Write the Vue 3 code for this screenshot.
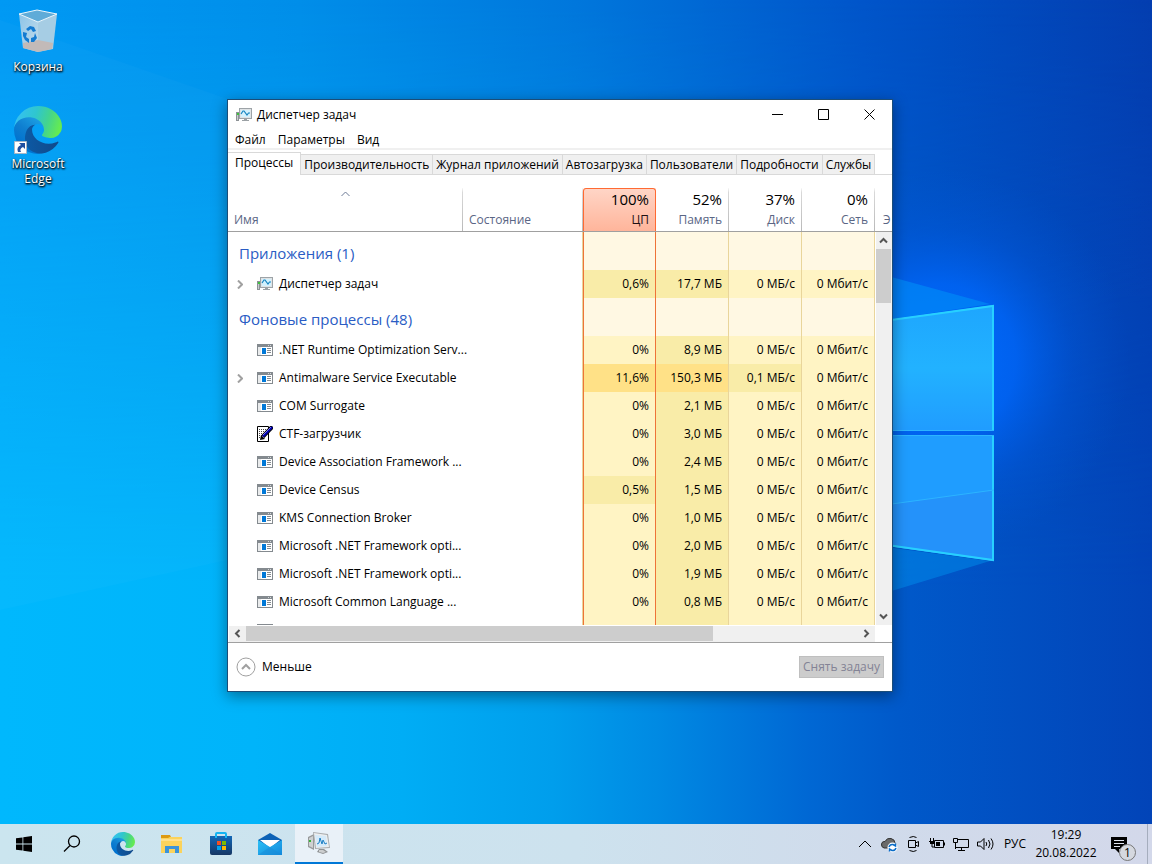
<template>
  <div class="desktop">
    <!-- shared icon shapes -->
    <svg class="sprites" aria-hidden="true">
      <defs>
        <linearGradient id="edge-dark" x1="60" y1="170" x2="236" y2="170" gradientUnits="userSpaceOnUse">
          <stop offset="0" stop-color="#0c59a4" />
          <stop offset="1" stop-color="#114a8b" />
        </linearGradient>
        <linearGradient id="edge-mid" x1="150" y1="90" x2="50" y2="220" gradientUnits="userSpaceOnUse">
          <stop offset="0" stop-color="#1b9de2" />
          <stop offset="0.5" stop-color="#0f7fd0" />
          <stop offset="1" stop-color="#0072cf" />
        </linearGradient>
        <linearGradient id="edge-top" x1="10" y1="60" x2="240" y2="130" gradientUnits="userSpaceOnUse">
          <stop offset="0" stop-color="#35c1f1" />
          <stop offset="0.4" stop-color="#2fc6cf" />
          <stop offset="0.7" stop-color="#43d48e" />
          <stop offset="1" stop-color="#66eb50" />
        </linearGradient>
        <linearGradient id="bin-face" x1="0" y1="0" x2="1" y2="1">
          <stop offset="0" stop-color="#8cc4e8" />
          <stop offset="1" stop-color="#c4dcea" />
        </linearGradient>
        <linearGradient id="store-face" x1="0" y1="0" x2="0" y2="1">
          <stop offset="0" stop-color="#1268b8" />
          <stop offset="1" stop-color="#173764" />
        </linearGradient>
        <linearGradient id="mail-face" x1="0" y1="0" x2="1" y2="1">
          <stop offset="0" stop-color="#2cc0f5" />
          <stop offset="1" stop-color="#1289dc" />
        </linearGradient>
      </defs>
      <symbol id="edge" viewBox="0 0 256 256">
        <path fill="url(#edge-mid)" d="M105.7 241.4a79.2 79.2 0 0 1-22.7-21.3 80.7 80.7 0 0 1 29.5-120c3.2-1.5 8.5-4.1 15.6-4a32.4 32.4 0 0 1 25.7 13 31.9 31.9 0 0 1 6.3 18.7c0-.2 24.5-79.6-80-79.6-43.9 0-80 41.6-80 78.2a130.2 130.2 0 0 0 12.1 56 128 128 0 0 0 156.4 67 75.5 75.5 0 0 1-62.9-8z" />
        <path fill="url(#edge-dark)" d="M231 190.5c-3.4 1.8-6.9 3.4-10.5 4.7a101.5 101.5 0 0 1-35.9 6.4c-47.3 0-88.5-32.5-88.5-74.3 0-11.4 6.4-21.9 16.4-27.3-42.8 1.8-53.8 46.4-53.8 72.5 0 74 68.1 81.4 82.8 81.4 7.9 0 19.8-2.3 27-4.6l1.3-.4a128.3 128.3 0 0 0 66.6-52.8 4 4 0 0 0-5.4-5.6z" />
        <path fill="url(#edge-top)" d="M152.3 148.9c-.9 1-3.4 2.5-3.4 5.6 0 2.6 1.7 5.2 4.8 7.3 14.3 10 41.4 8.6 41.5 8.6a59.6 59.6 0 0 0 30.3-8.3 61.4 61.4 0 0 0 30.4-52.9c.3-22.4-8-37.3-11.3-43.9C223.5 23.9 177.7 0 128 0A128 128 0 0 0 0 126.2c.5-36.5 36.8-66 80-66 3.5 0 23.5.3 42 10.1 16.3 8.6 24.9 18.9 30.8 29.2 6.2 10.7 7.3 24.1 7.3 29.5 0 5.3-2.7 13.3-7.8 19.9z" />
      </symbol>
      <symbol id="monitor" viewBox="0 0 16 16">
        <path fill="#8d9296" d="M0 5h3v9H0z" />
        <path fill="#c9cdd0" d="M1 6h1v7H1z" />
        <path fill="#3fc13f" d="M1 6h2v2H1z" />
        <path fill="#9da3a7" d="M3 1h13v11H3z" />
        <path fill="#dfe3e5" d="M4 2h11v9H4z" />
        <path fill="#d3f1fd" d="M5 3h9v7H5z" />
        <path fill="none" stroke="#1483c0" stroke-width="1.200" d="M5 7l2-3h1l3 4 1.500-2H14" />
        <path fill="#9ba1a5" d="M8 12h3v1H8zM6 13h7v1H6z" />
      </symbol>
      <symbol id="exe" viewBox="0 0 16 16">
        <path fill="#848a8f" d="M0 2h16v12H0z" />
        <path fill="#fff" d="M1 5h14v8H1z" />
        <path fill="#e9ebec" d="M1 5h3v8H1z" />
        <path fill="#d5d8da" d="M11 3h1v1h-1zM13 3h1v1h-1z" />
        <path fill="#0078d7" d="M5 6h4v6H5z" />
        <path fill="#848a8f" d="M10 6h4v1h-4zM10 8h4v1h-4zM10 10h4v1h-4z" />
      </symbol>
      <symbol id="ctf" viewBox="0 0 16 16">
        <path fill="#fff" stroke="#000" d="M.5.500h11v15H.5z" />
        <path stroke="#444" stroke-dasharray="1 1" d="M2 3.500h8M2 5.500h8M2 7.500h7M2 9.500h5M2 11.500h3" />
        <path stroke="#000" stroke-width="4" d="M15.500.500 6 10.500" />
        <path fill="#000" d="M4 9l4 4-5 1z" />
        <path stroke="#0000b0" stroke-width="2.500" d="M15 1 6 10.500" />
        <path stroke="#7777f0" d="M14 1 6 9" />
      </symbol>
    </svg>

    <svg class="wallpaper" viewBox="0 0 1152 864" preserveAspectRatio="xMidYMid slice" aria-hidden="true">
      <defs>
        <linearGradient id="sky-top" x1="0" y1="0" x2="1" y2="0">
          <stop offset="0" stop-color="#0099f4" />
          <stop offset="0.26" stop-color="#008ee9" />
          <stop offset="0.5" stop-color="#0077dc" />
          <stop offset="0.75" stop-color="#0055ca" />
          <stop offset="1" stop-color="#043eb0" />
        </linearGradient>
        <linearGradient id="sky-low" x1="0" y1="0" x2="1" y2="0">
          <stop offset="0" stop-color="#00b8fd" />
          <stop offset="0.22" stop-color="#00b4fa" />
          <stop offset="0.35" stop-color="#00adf5" />
          <stop offset="0.48" stop-color="#009eec" />
          <stop offset="0.57" stop-color="#008ae3" />
          <stop offset="0.7" stop-color="#0068d4" />
          <stop offset="0.78" stop-color="#0059ca" />
          <stop offset="1" stop-color="#0244b8" />
        </linearGradient>
        <linearGradient id="fade" x1="0" y1="0" x2="0" y2="1">
          <stop offset="0" stop-color="#000" />
          <stop offset="0.68" stop-color="#fff" />
        </linearGradient>
        <mask id="low-mask">
          <path fill="url(#fade)" d="M0 0h1152v864H0z" />
        </mask>
        <radialGradient id="glow" gradientUnits="userSpaceOnUse" cx="940" cy="360" r="190">
          <stop offset="0" stop-color="#006cff" />
          <stop offset="0.4" stop-color="#0066fa" stop-opacity="0.8" />
          <stop offset="0.7" stop-color="#005ce6" stop-opacity="0.3" />
          <stop offset="1" stop-color="#0058d8" stop-opacity="0" />
        </radialGradient>
        <linearGradient id="pane-up" x1="0" y1="0" x2="0" y2="1">
          <stop offset="0" stop-color="#1ea6fe" />
          <stop offset="0.5" stop-color="#22b2ff" />
          <stop offset="1" stop-color="#209cff" />
        </linearGradient>
      </defs>
      <path fill="url(#sky-top)" d="M0 0h1152v864H0z" />
      <path fill="url(#sky-low)" mask="url(#low-mask)" d="M0 0h1152v864H0z" />
      <path fill="url(#glow)" d="M0 0h1152v864H0z" />
      <path fill="#fff" fill-opacity="0.020" d="M0 20l600 208v250L0 610z" />
      <path fill="#0094f8" fill-opacity="0.550" d="M760 241l230 63-230 35z" />
      <path fill="#0094f0" fill-opacity="0.450" d="M760 530l230 31-230 70z" />
      <path fill="url(#pane-up)" d="M760 338l234-33v126H760z" />
      <path fill="#1f9dff" d="M760 435h234v126l-234-33z" />
      <path fill="#2492fa" d="M760 522l234-32v71l-234-33z" />
      <path fill="none" stroke="#27d0ff" stroke-width="2" d="M760 338l233-32v124" />
      <path fill="none" stroke="#27d0ff" stroke-width="2" d="M993 435v125l-233-33" />
      <path fill="none" stroke="#2cb4ff" d="M760 430.500h234M760 435.500h234M760 522l234-32" />
    </svg>

    <main class="workspace">
      <nav class="shortcuts">
        <a href="#" class="shortcut">
          <svg width="48" height="48" viewBox="0 0 48 48">
            <path fill="#5fabd8" d="M5 5l18-4 20 4-19 8z" />
            <path fill="url(#bin-face)" d="M5 5l19 8v30l-15-4z" />
            <path fill="#a6cde4" d="M24 13l19-8-4 35-15 3z" />
            <path fill="#c2bab8" d="M9 34l15-3 15 3-1 6-14 3-15-4z" />
            <path fill="none" stroke="#edf6fb" d="M5 5l18-4 20 4-19 8z" />
            <path fill="#137bd1" d="M12 20l4-3 4 1 2 4-3 1-2-3-3 2zM9 23l4 1-1 4 3 2v4l-4-3-2-4zM17 29l3-1 1-4 2 5-3 4h-3z" />
          </svg>
          <span>Корзина</span>
        </a>
        <a href="#" class="shortcut">
          <svg width="48" height="48" viewBox="0 0 48 48">
            <use href="#edge" width="48" height="48" />
            <path fill="#fff" stroke="#a9b7c6" d="M.5 35.500h12v12H.5z" />
            <path fill="#1f4fa0" d="M5 37h6v6l-2-2q-4 2-2 5H4q-2-5 3-7z" />
          </svg>
          <span>Microsoft Edge</span>
        </a>
      </nav>

      <section class="window" aria-label="Диспетчер задач">
        <header class="titlebar">
          <svg width="16" height="16"><use href="#monitor" /></svg>
          <h1>Диспетчер задач</h1>
          <button type="button" aria-label="Свернуть">
            <svg width="11" height="11"><path d="M0 5.500h11" /></svg>
          </button>
          <button type="button" aria-label="Развернуть">
            <svg width="11" height="11"><path d="M.5.500h10v10H.5z" /></svg>
          </button>
          <button type="button" aria-label="Закрыть">
            <svg width="11" height="11"><path d="M.5.500l10 10M10.500.500l-10 10" /></svg>
          </button>
        </header>

        <nav class="menu">
          <button v-for="item in menu" :key="item" type="button">{{ item }}</button>
        </nav>

        <div class="tabs" role="tablist">
          <button
            v-for="tab in tabs"
            :key="tab"
            type="button"
            role="tab"
            :aria-selected="tab === activeTab"
            :class="{ active: tab === activeTab }"
            @click="activeTab = tab"
          >{{ tab }}</button>
        </div>

        <div class="viewer">
          <table>
            <colgroup>
              <col class="col-name" />
              <col class="col-state" />
              <col v-for="n in 4" :key="n" class="col-usage" />
              <col class="col-rest" />
            </colgroup>
            <thead>
              <tr>
                <th scope="col" class="left">
                  <div>
                    <svg class="sort" width="9" height="6"><path d="M.5 5l4-4 4 4" /></svg>
                    <span>Имя</span>
                  </div>
                </th>
                <th scope="col" class="left"><div><span>Состояние</span></div></th>
                <th v-for="col in usage" :key="col.label" scope="col" :class="{ hot: col.hot }">
                  <div>
                    <strong>{{ col.total }}</strong>
                    <span>{{ col.label }}</span>
                  </div>
                </th>
                <th scope="col" class="left rest"><div><span>Э</span></div></th>
              </tr>
            </thead>
            <tbody v-for="group in groups" :key="group.title">
              <tr class="group">
                <th colspan="2" scope="rowgroup">{{ group.title }}</th>
                <td v-for="n in 4" :key="n"></td>
              </tr>
              <tr v-for="(p, i) in group.items" :key="i">
                <td class="name" colspan="2">
                  <div>
                    <svg class="expander" width="6" height="9">
                      <path v-if="p.open" d="M1 .5l4 4-4 4" />
                    </svg>
                    <svg width="16" height="16"><use :href="'#' + (p.icon || 'exe')" /></svg>
                    <span>{{ p.name }}</span>
                  </div>
                </td>
                <td v-for="(v, c) in p.values" :key="c" :class="'heat-' + p.heat[c]">{{ v }}</td>
              </tr>
            </tbody>
          </table>
          <div class="vscroll">
            <button type="button" aria-label="Вверх">
              <svg width="9" height="7"><path d="M1 5.500L4.500 2 8 5.500" /></svg>
            </button>
            <div class="thumb"></div>
            <button type="button" aria-label="Вниз">
              <svg width="9" height="7"><path d="M1 1.500L4.500 5 8 1.500" /></svg>
            </button>
          </div>
        </div>

        <div class="hscroll">
          <button type="button" aria-label="Влево">
            <svg width="7" height="9"><path d="M5.500 1L2 4.500 5.500 8" /></svg>
          </button>
          <div class="thumb"></div>
          <button type="button" aria-label="Вправо">
            <svg width="7" height="9"><path d="M1.500 1L5 4.500 1.500 8" /></svg>
          </button>
        </div>

        <footer class="bottom">
          <button type="button" class="less">
            <svg width="20" height="20">
              <circle cx="10" cy="10" r="9" />
              <path d="M6 12l4-4 4 4" />
            </svg>
            Меньше
          </button>
          <button type="button" class="end-task" disabled>Снять задачу</button>
        </footer>
      </section>
    </main>

    <footer class="taskbar">
      <button type="button" class="start" aria-label="Пуск">
        <svg width="16" height="16" viewBox="0 0 16 16">
          <path fill="#000" d="M0 2.300l6.500-.9v6.200H0zM7.300 1.300L16 0v7.600H7.300zM0 8.400h6.500v6.200L0 13.700zM7.300 8.400H16V16l-8.700-1.300z" />
        </svg>
      </button>
      <button type="button" class="search" aria-label="Поиск">
        <svg width="18" height="18" viewBox="0 0 18 18">
          <g fill="none" stroke="#000" stroke-width="1.300">
            <circle cx="11" cy="6.500" r="5.500" />
            <path d="M7 10.500L1 16.500" />
          </g>
        </svg>
      </button>
      <button type="button" aria-label="Microsoft Edge">
        <svg width="24" height="24"><use href="#edge" /></svg>
      </button>
      <button type="button" aria-label="Проводник">
        <svg width="24" height="24" viewBox="0 0 24 24">
          <path fill="#dd9a12" d="M1 3h9l1 2v3H1z" />
          <path fill="#fbd35c" d="M1 6h7l2-1h12v16H1z" />
          <path fill="#ffe08a" d="M1 7h21v2H1z" />
          <path fill="#3a93d8" d="M5 14h14v7h-4v-4H9v4H5z" />
        </svg>
      </button>
      <button type="button" aria-label="Магазин">
        <svg width="24" height="24" viewBox="0 0 24 24">
          <path fill="none" stroke="#14b4f2" stroke-width="2" d="M7 6V2q0-1 1-1h8q1 0 1 1v4" />
          <path fill="url(#store-face)" d="M1 4h22v17q0 2-2 2H3q-2 0-2-2z" />
          <path fill="#14b4f2" d="M6 4h2v2H6zM16 4h2v2h-2z" />
          <path fill="#f25022" d="M8 9h4v4H8z" />
          <path fill="#7fba00" d="M13 9h4v4h-4z" />
          <path fill="#00a4ef" d="M8 14h4v4H8z" />
          <path fill="#ffb900" d="M13 14h4v4h-4z" />
        </svg>
      </button>
      <button type="button" aria-label="Почта">
        <svg width="24" height="24" viewBox="0 0 24 24">
          <path fill="#0b61b5" d="M0 8l12-7 12 7v8H0z" />
          <path fill="#fff" d="M2 8h20l-10 8z" />
          <path fill="url(#mail-face)" d="M0 8l12 7 12-7v15H0z" />
          <path fill="#1789d6" fill-opacity="0.500" d="M0 23l12-8 12 8z" />
        </svg>
      </button>
      <button type="button" class="running" aria-label="Диспетчер задач">
        <svg width="24" height="24" viewBox="0 0 24 24">
          <path fill="#97999b" d="M1 6l6-3v16l-6-3z" />
          <path fill="#cfd1d2" d="M2 7l4-2v12l-4-2z" />
          <path fill="#35b535" d="M2 9h2v2H2z" />
          <path fill="#a9acae" d="M6 1l15 2 2 14-15 1z" />
          <path fill="#eceeef" d="M7 2l13 2 2 12-13 1z" />
          <path fill="#d4eafa" d="M8 4l11 1 1 10-10 1z" />
          <path fill="none" stroke="#1b7fc4" d="M10 13l2-1 1-5 2 6 1-4 2 4 2-1" />
          <path fill="#8f9294" d="M12 18h5l4 3-5 2-6-2z" />
          <path fill="#cccecf" d="M12 19h4l3 2-3 1-4-1z" />
        </svg>
      </button>

      <div class="tray">
        <button type="button" aria-label="Показать скрытые значки">
          <svg width="18" height="18"><path d="M3 12l6-6 6 6" /></svg>
        </button>
        <button type="button" aria-label="OneDrive">
          <svg width="18" height="18">
            <path fill="#6a6a6a" stroke="#333" d="M4 13q-3-1-2.500-4T5 6.500q2-4 6-3T15 8v5z" />
            <circle cx="12.500" cy="12.500" r="5" fill="#fff" stroke="none" />
            <path stroke="#0a6cc8" stroke-width="1.500" d="M9 12q1-3 4-2.500l2.500 1.500V8.500M16 13q-1 3-4 2.500L9.500 14v2.500" />
          </svg>
        </button>
        <button type="button" aria-label="Провести собрание">
          <svg width="18" height="18">
            <path d="M5.500 2.500q4-2 7 0M5.500 15.500q4 2 7 0M4.500 5.500h7v7h-7zM11.500 8l3-1.500v5l-3-1.500" />
          </svg>
        </button>
        <button type="button" aria-label="Батарея">
          <svg width="18" height="18">
            <path d="M6.500 5.500h9v7h-9zM16.500 7.500v3M2.500 3v3M5.500 3v3M1 6.500h6M4 7v5h2" />
            <path fill="#000" stroke="none" d="M2 6h4v3H2zM8 7h4v4H8z" />
          </svg>
        </button>
        <button type="button" aria-label="Сеть">
          <svg width="18" height="18">
            <path d="M5.500 4.500h11v8H3.500V9M1.500 3.500h4v4h-4zM3.500 7.500V14M9.500 13v2M6 15.500h7" />
          </svg>
        </button>
        <button type="button" aria-label="Громкость">
          <svg width="18" height="18">
            <path d="M1.500 7h3l3.500-3.500v11L4.500 11h-3zM10 7q1.500 2 0 4M12.500 5q3 4 0 8M15 3.500q4 5.500 0 11" />
          </svg>
        </button>
        <button type="button" class="lang">РУС</button>
        <button type="button" class="clock">
          <time>19:29</time>
          <time>20.08.2022</time>
        </button>
        <button type="button" class="notes" aria-label="Уведомления">
          <svg width="18" height="18">
            <path fill="#000" stroke="none" d="M1 2h16v12H9v4l-4-4H1z" />
            <path stroke="#dfe3ef" d="M4 5.500h10M4 8.500h10M4 11.500h6" />
          </svg>
          <span class="badge">1</span>
        </button>
        <button type="button" class="peek" aria-label="Свернуть все окна"></button>
      </div>
    </footer>
  </div>
</template>

<script setup>
import { ref } from 'vue'

const menu = ['Файл', 'Параметры', 'Вид']
const tabs = [
  'Процессы',
  'Производительность',
  'Журнал приложений',
  'Автозагрузка',
  'Пользователи',
  'Подробности',
  'Службы'
]
const activeTab = ref('Процессы')

const usage = [
  { label: 'ЦП', total: '100%', hot: true },
  { label: 'Память', total: '52%' },
  { label: 'Диск', total: '37%' },
  { label: 'Сеть', total: '0%' }
]

// most processes idle: only memory differs
const idle = (name, memory, extra = {}) => ({
  name,
  values: ['0%', memory, '0 МБ/с', '0 Мбит/с'],
  heat: [0, 1, 0, 0],
  ...extra
})

const groups = [
  {
    title: 'Приложения (1)',
    items: [
      {
        name: 'Диспетчер задач',
        icon: 'monitor',
        open: true,
        values: ['0,6%', '17,7 МБ', '0 МБ/с', '0 Мбит/с'],
        heat: [1, 1, 0, 0]
      }
    ]
  },
  {
    title: 'Фоновые процессы (48)',
    items: [
      idle('.NET Runtime Optimization Serv...', '8,9 МБ'),
      {
        name: 'Antimalware Service Executable',
        open: true,
        values: ['11,6%', '150,3 МБ', '0,1 МБ/с', '0 Мбит/с'],
        heat: [2, 2, 1, 0]
      },
      idle('COM Surrogate', '2,1 МБ'),
      idle('CTF-загрузчик', '3,0 МБ', { icon: 'ctf' }),
      idle('Device Association Framework ...', '2,4 МБ'),
      {
        name: 'Device Census',
        values: ['0,5%', '1,5 МБ', '0 МБ/с', '0 Мбит/с'],
        heat: [1, 1, 0, 0]
      },
      idle('KMS Connection Broker', '1,0 МБ'),
      idle('Microsoft .NET Framework opti...', '2,0 МБ'),
      idle('Microsoft .NET Framework opti...', '1,9 МБ'),
      idle('Microsoft Common Language ...', '0,8 МБ'),
      { name: '', values: ['', '', '', ''], heat: [0, 1, 0, 0] }
    ]
  }
]
</script>

<style>
body {
  margin: 0;
}
</style>

<style scoped>
.desktop {
  position: relative;
  display: flex;
  flex-direction: column;
  height: 100vh;
  overflow: hidden;
  font-family: "Segoe UI", "Open Sans", "Noto Sans", sans-serif;
  font-size: 12px;
  line-height: 16px;
  color: #000;
}

button {
  margin: 0;
  padding: 0;
  border: 0;
  background: none;
  font: inherit;
  color: inherit;
}

svg {
  display: block;
  flex: none;
}

.sprites {
  position: absolute;
  width: 0;
  height: 0;
}

.wallpaper {
  position: absolute;
  inset: 0;
  width: 100%;
  height: 100%;
}

.workspace {
  position: relative;
  flex: 1;
  min-height: 0;
}

/* desktop shortcuts */
.shortcuts {
  display: flex;
  flex-direction: column;
  gap: 24px;
  width: 76px;
  padding-top: 9px;
}

.shortcut {
  display: flex;
  flex-direction: column;
  align-items: center;
  gap: 2px;
  min-height: 73px;
  padding: 0 8px;
  color: #fff;
  line-height: 15px;
  text-align: center;
  text-decoration: none;
  text-shadow: 0 1px 2px #000, 1px 1px 2px #000;
}

/* task manager window */
.window {
  position: absolute;
  left: 227px;
  top: 99px;
  width: 664px;
  border: 1px solid #1b4d78;
  background: #fff;
  box-shadow: 0 4px 14px rgba(0, 0, 0, 0.4);
}

.titlebar {
  display: flex;
  align-items: center;
  height: 30px;
  padding-left: 8px;
}

.titlebar h1 {
  flex: 1;
  margin: 0 0 0 5px;
  font-size: 12px;
  font-weight: 400;
}

.titlebar button {
  display: grid;
  place-items: center;
  align-self: flex-start;
  width: 46px;
  height: 29px;
}

.titlebar button path {
  fill: none;
  stroke: #000;
}

.menu {
  display: flex;
  gap: 12px;
  height: 18px;
  padding-left: 7px;
  border-bottom: 2px solid #f0f0f0;
}

.menu button {
  line-height: 20px;
}

.tabs {
  display: flex;
  align-items: flex-end;
  height: 23px;
  padding-top: 2px;
  margin-bottom: 1px;
  box-shadow: inset 0 -1px #d9d9d9;
}

.tabs button {
  height: 21px;
  padding: 0 3px;
  border: 1px solid #d9d9d9;
  border-left: 0;
  background: #f0f0f0;
  white-space: nowrap;
}

.tabs .active {
  height: 23px;
  padding: 0 7px 3px;
  border-bottom: 0;
  background: #fff;
}

/* process table */
.viewer {
  display: grid;
  grid-template-columns: 1fr 16px;
  grid-template-rows: 56px 393px;
  height: 449px;
  margin-bottom: 1px;
  overflow: hidden;
}

table {
  grid-area: 1 / 1 / 3 / 3;
  width: 100%;
  border-collapse: separate;
  border-spacing: 0;
  table-layout: fixed;
}

.col-name {
  width: 235px;
}

.col-usage {
  width: 73px;
}

.col-rest {
  width: 17px;
}

th,
td {
  box-sizing: border-box;
  padding: 0;
  font-weight: 400;
  white-space: nowrap;
}

thead th {
  height: 56px;
  padding-top: 12px;
  border-bottom: 1px solid #a0a0a0;
  color: #5a6685;
  text-align: right;
}

thead th div {
  box-sizing: border-box;
  display: flex;
  flex-direction: column;
  height: 43px;
  padding: 1px 6px 3px;
  border-right: 1px solid;
  border-image: linear-gradient(#fff, #d9d9d9 12%, #b8b8b8) 1;
}

thead th span {
  margin-top: auto;
  line-height: 17px;
}

thead strong {
  color: #000;
  font-size: 15px;
  font-weight: 400;
  line-height: 20px;
}

thead .left {
  text-align: left;
}

thead .rest div {
  padding-right: 0;
  padding-left: 8px;
  border: 0;
  overflow: hidden;
}

.sort {
  align-self: center;
  margin-top: 2px;
  fill: none;
  stroke: #6d7a96;
}

thead .hot div {
  padding-top: 0;
  border: 1px solid #ff6a33;
  border-bottom: 0;
  border-image: none;
  border-radius: 3px 3px 0 0;
  background: linear-gradient(#ffd5c6, #ffb59b);
}

thead .hot div span {
  color: #1e1014;
}

tbody th {
  height: 38px;
  padding: 4px 0 0 11px;
  border-right: 1px solid #e6d49c;
  color: #2a5cc4;
  font-size: 15px;
  text-align: left;
}

tbody td {
  height: 28px;
  padding-right: 6px;
  border-right: 1px solid #e9d59b;
  text-align: right;
}

.group td {
  background: #fff8e3;
}

tbody th + td,
tbody .name + td {
  border-right-color: #ee7338;
  border-left: 1px solid #ee7338;
}

.name div {
  display: flex;
  align-items: center;
  padding-left: 9px;
}

.name span {
  margin-left: 6px;
}

.expander {
  margin-right: 14px;
  fill: none;
  stroke: #a0a0a0;
  stroke-width: 2;
}

.heat-0 {
  background: #fff4c4;
}

.heat-1 {
  background: #f9eca8;
}

.heat-2 {
  background: #ffe187;
}

/* scroll bars */
.vscroll {
  grid-area: 2 / 2;
  display: flex;
  flex-direction: column;
  background: #f0f0f0;
}

.vscroll .thumb {
  width: 15px;
  height: 54px;
  margin-bottom: auto;
  background: #cdcdcd;
}

.vscroll button,
.hscroll button {
  display: grid;
  place-items: center;
  width: 17px;
  height: 17px;
}

.vscroll button {
  width: 15px;
}

.vscroll path,
.hscroll path {
  fill: none;
  stroke: #555;
  stroke-width: 2;
}

.hscroll {
  display: flex;
  height: 16px;
  margin-right: 17px;
  margin-left: 1px;
  background: #f0f0f0;
}

.hscroll .thumb {
  width: 467px;
  height: 15px;
  margin-right: auto;
  background: #cdcdcd;
}

.hscroll button {
  height: 15px;
}

.bottom {
  display: flex;
  align-items: center;
  justify-content: space-between;
  height: 48px;
  padding: 0 8px;
  border-top: 1px solid #a0a0a0;
}

.less {
  display: flex;
  align-items: center;
  gap: 6px;
}

.less svg {
  fill: none;
  stroke: #a0a0a0;
}

.less path {
  stroke-width: 2;
}

.end-task {
  height: 22px;
  padding: 0 3px;
  border: 1px solid #bfbfbf;
  background: #ccc;
  color: #838395;
}

/* task bar */
.taskbar {
  position: relative;
  display: flex;
  gap: 1px;
  height: 40px;
  background: linear-gradient(90deg, #cbe5ef, #cde2ee 50%, #d0dbeb 75%, #d3d8ea);
}

.taskbar > button {
  display: grid;
  place-items: center;
  width: 48px;
}

.taskbar .search {
  margin: 0 2px 0 -1px;
}

.taskbar .running {
  border-bottom: 2px solid #0078d7;
  background: #e9f1f8;
}

.tray {
  display: flex;
  margin-left: auto;
}

.tray button {
  display: grid;
  place-items: center;
  width: 24px;
}

.tray svg {
  fill: none;
  stroke: #000;
}

.tray .lang {
  width: 36px;
}

.tray .clock {
  align-content: center;
  width: 66px;
  line-height: 18px;
}

.tray .notes {
  position: relative;
  width: 40px;
  margin-right: 8px;
}

.badge {
  position: absolute;
  right: 3px;
  bottom: 3px;
  width: 15px;
  height: 15px;
  border: 1px solid #777;
  border-radius: 50%;
  background: #d5d8df;
  line-height: 15px;
}

.tray .peek {
  width: 5px;
  border-left: 1px solid #a5adbd;
}
</style>
